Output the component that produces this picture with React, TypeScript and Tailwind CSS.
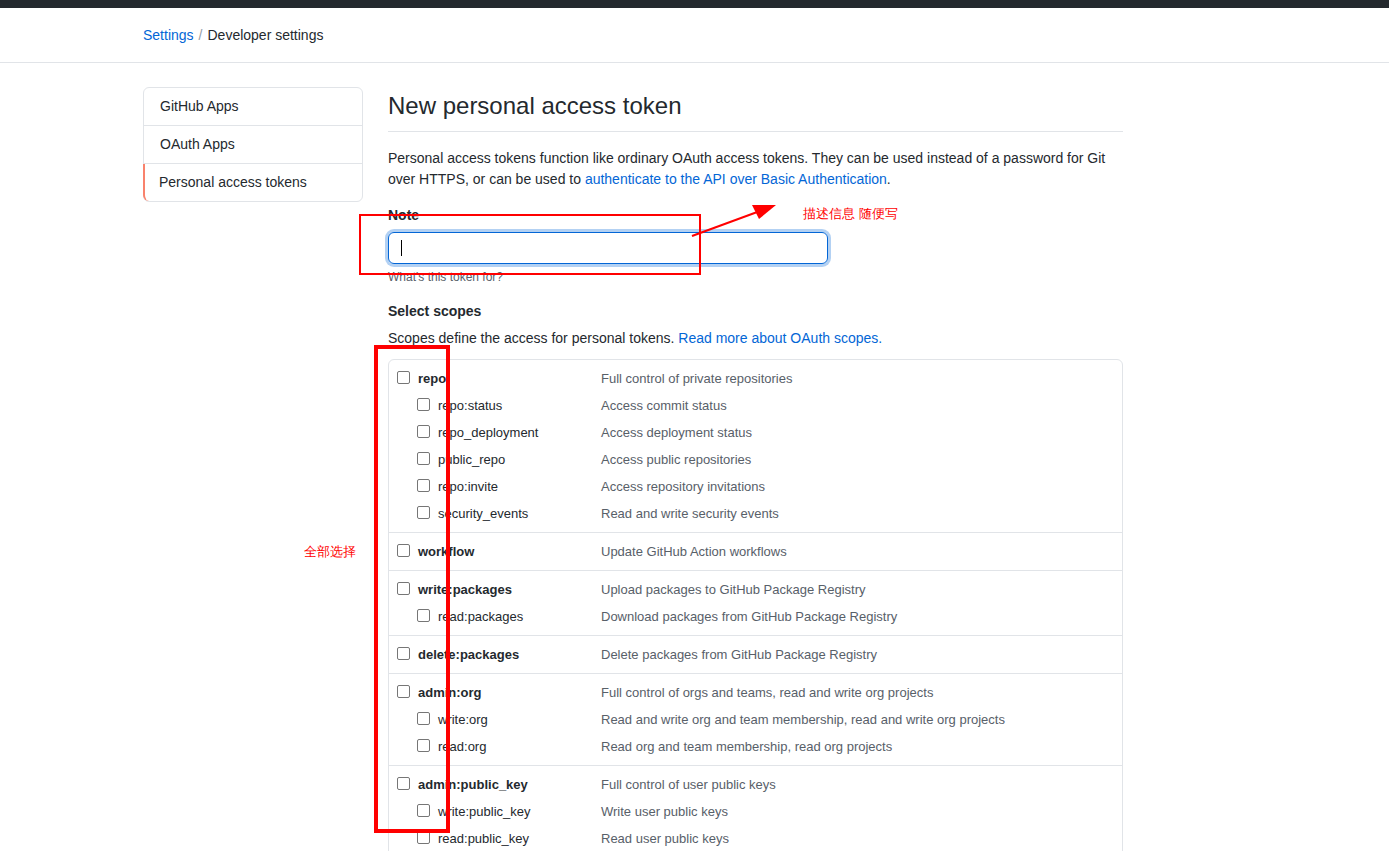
import React from "react";

type Scope = { name: string; desc: string; children?: { name: string; desc: string }[] };

const scopes: Scope[] = [
  {
    name: "repo",
    desc: "Full control of private repositories",
    children: [
      { name: "repo:status", desc: "Access commit status" },
      { name: "repo_deployment", desc: "Access deployment status" },
      { name: "public_repo", desc: "Access public repositories" },
      { name: "repo:invite", desc: "Access repository invitations" },
      { name: "security_events", desc: "Read and write security events" },
    ],
  },
  { name: "workflow", desc: "Update GitHub Action workflows" },
  {
    name: "write:packages",
    desc: "Upload packages to GitHub Package Registry",
    children: [{ name: "read:packages", desc: "Download packages from GitHub Package Registry" }],
  },
  { name: "delete:packages", desc: "Delete packages from GitHub Package Registry" },
  {
    name: "admin:org",
    desc: "Full control of orgs and teams, read and write org projects",
    children: [
      { name: "write:org", desc: "Read and write org and team membership, read and write org projects" },
      { name: "read:org", desc: "Read org and team membership, read org projects" },
    ],
  },
  {
    name: "admin:public_key",
    desc: "Full control of user public keys",
    children: [
      { name: "write:public_key", desc: "Write user public keys" },
      { name: "read:public_key", desc: "Read user public keys" },
    ],
  },
  {
    name: "admin:repo_hook",
    desc: "Full control of repository hooks",
    children: [
      { name: "write:repo_hook", desc: "Write repository hooks" },
      { name: "read:repo_hook", desc: "Read repository hooks" },
    ],
  },
];

function Box() {
  return (
    <span className="inline-block w-[13px] h-[13px] shrink-0 rounded-[2px] border border-[#767676] bg-white -mt-[3px]" />
  );
}

function ScopeRow({ name, desc, child }: { name: string; desc: string; child?: boolean }) {
  return (
    <div className={`flex items-center h-[27px] text-[13px] ${child ? "pl-[28px]" : "pl-[8px]"}`}>
      <div className={`flex items-center gap-[8px] ${child ? "w-[184px]" : "w-[204px]"}`}>
        <Box />
        <span className={child ? "text-[#24292e]" : "font-bold text-[#24292e]"}>{name}</span>
      </div>
      <span className="text-[#586069]">{desc}</span>
    </div>
  );
}

export default function App() {
  return (
    <div
      className="relative min-h-screen bg-white text-[14px] leading-[21px] text-[#24292e]"
      style={{ fontFamily: '"Liberation Sans", Arial, sans-serif' }}
    >
      <div className="h-2 bg-[#24292e]" />

      <div className="border-b border-[#e1e4e8] h-[55px] flex items-center">
        <div className="ml-[143px] flex items-center gap-[5px] mt-px">
          <a className="text-[#0366d6]">Settings</a>
          <span className="text-[#959da5]">/</span>
          <span>Developer settings</span>
        </div>
      </div>

      <div className="ml-[143px] w-[980px] flex gap-[25px] pt-6 pb-20">
        <nav className="w-[220px] shrink-0 self-start border border-[#e1e4e8] rounded-[6px] bg-white">
          <div className="h-[38px] flex items-center pl-4 border-b border-[#e1e4e8]">GitHub Apps</div>
          <div className="h-[38px] flex items-center pl-4 border-b border-[#e1e4e8]">OAuth Apps</div>
          <div className="h-[37px] flex items-center pl-[14px] border-l-2 border-[#f9826c] -ml-px rounded-bl-[6px]">
            Personal access tokens
          </div>
        </nav>

        <main className="flex-1">
          <div className="border-b border-[#e1e4e8] pb-[10px] mt-[4px]">
            <h2 className="text-[24px] leading-[30px] font-normal">New personal access token</h2>
          </div>

          <p className="mt-4">
            Personal access tokens function like ordinary OAuth access tokens. They can be used instead of a password for Git
            over HTTPS, or can be used to{" "}
            <a className="text-[#0366d6]">authenticate to the API over Basic Authentication</a>.
          </p>

          <div className="mt-[15px] font-bold">Note</div>
          <div className="mt-[6px] w-[440px] h-[32px] rounded-[6px] border border-[#0366d6] shadow-[0_0_0_3px_rgba(3,102,214,0.3)] flex items-center pl-3">
            <span className="w-px h-4 bg-black" />
          </div>
          <div className="mt-[4px] text-[12px] leading-[18px] text-[#586069]">What's this token for?</div>

          <div className="mt-[15px] font-bold">Select scopes</div>
          <p className="mt-[6px]">
            Scopes define the access for personal tokens.{" "}
            <a className="text-[#0366d6]">Read more about OAuth scopes.</a>
          </p>

          <div className="mt-[10px] border border-[#e1e4e8] rounded-[6px]">
            {scopes.map((s, i) => (
              <div key={s.name} className={`py-[5px] ${i > 0 ? "border-t border-[#e1e4e8]" : ""}`}>
                <ScopeRow name={s.name} desc={s.desc} />
                {s.children?.map((c) => (
                  <ScopeRow key={c.name} name={c.name} desc={c.desc} child />
                ))}
              </div>
            ))}
          </div>
        </main>
      </div>

      {/* red annotations drawn over the screenshot */}
      <div className="absolute left-[359px] top-[214px] w-[342px] h-[61px] border-2 border-[#ff0000]" />
      <svg className="absolute left-0 top-0 pointer-events-none" width="1389" height="851">
        <line x1="692" y1="236" x2="760" y2="211" stroke="#ff0000" strokeWidth="2" />
        <polygon points="776,205 752,205 759,219" fill="#ff0000" />
      </svg>
      <div className="absolute left-[803px] top-[205px] text-[13px] leading-[18px] text-[#ff0000]">描述信息 随便写</div>
      <div className="absolute left-[374px] top-[345px] w-[76px] h-[488px] border-4 border-[#ff0000]" />
      <div className="absolute left-[304px] top-[543px] text-[13px] leading-[18px] text-[#ff0000]">全部选择</div>
    </div>
  );
}
